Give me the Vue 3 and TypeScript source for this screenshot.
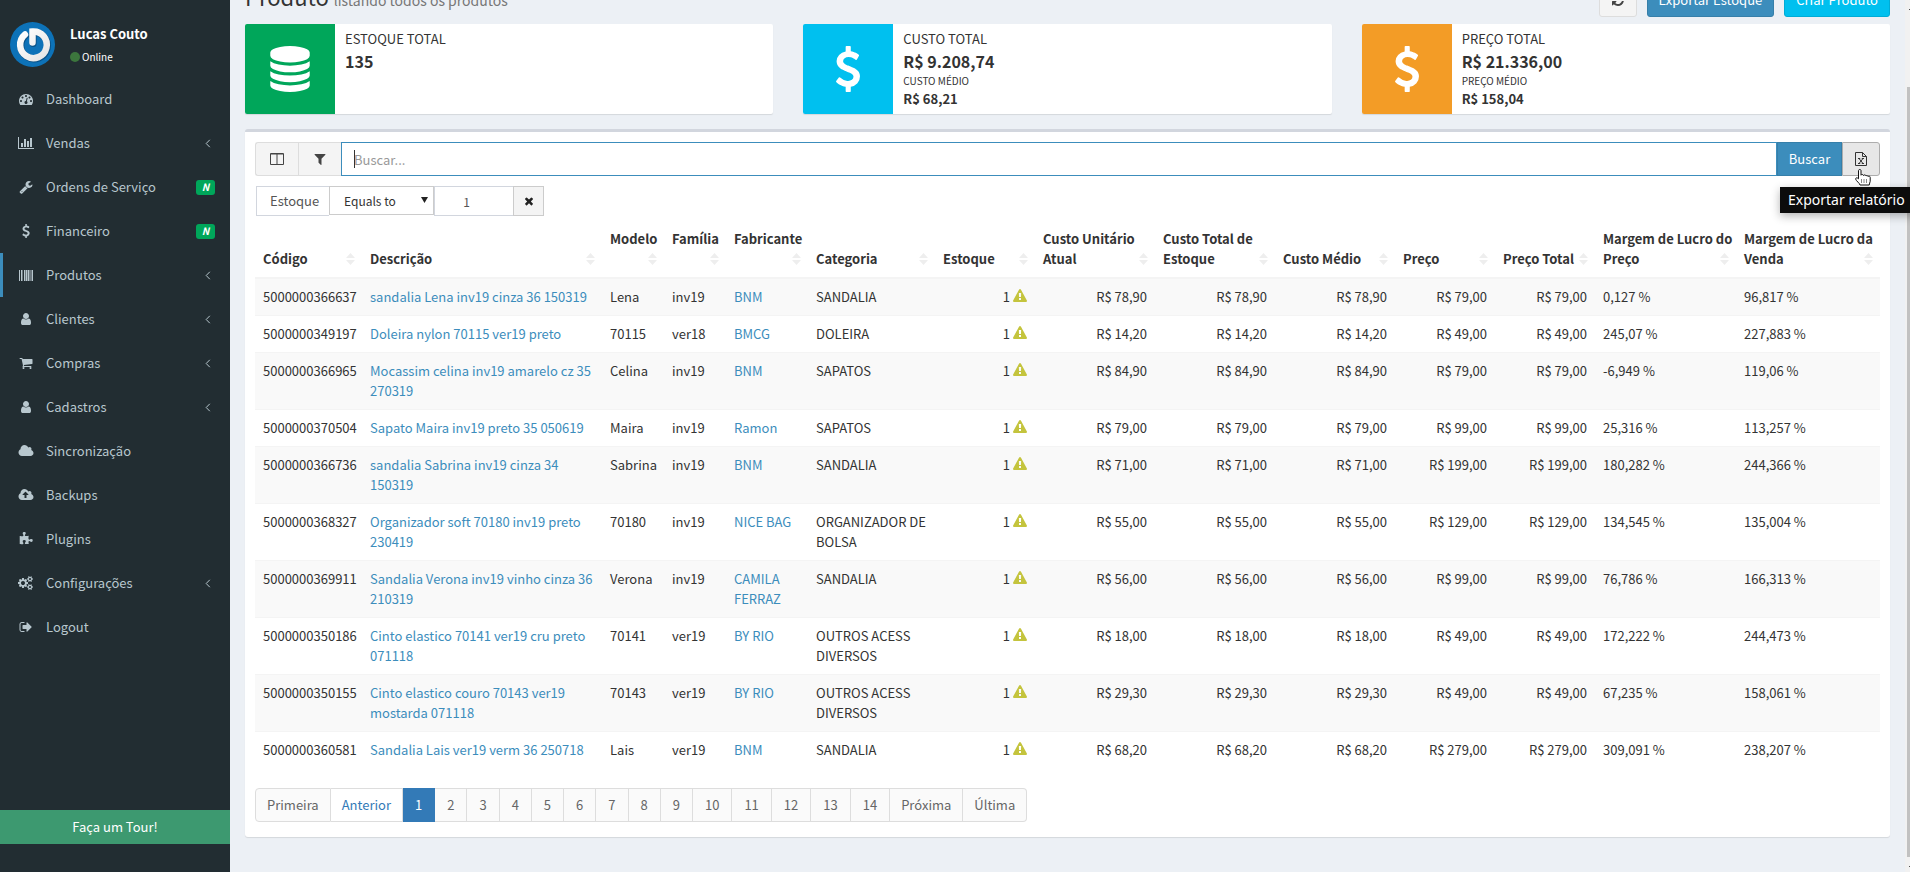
<script setup lang="ts">
import { ref } from 'vue'

interface Icon { box: string; d: string }
interface MenuItem { label: string; icon: string; arrow?: boolean; badge?: boolean; active?: boolean }
interface Product {
  code: string; name: string; model: string; family: string; maker: string; category: string
  stock: number; cost: string; price: string; priceMargin: string; saleMargin: string
}

const gearSmall = 'v140q0 16-149 31-12 27-30 52 51 113 51 138 0 4-4 7-122 71-124 71-8 0-46-47t-52-68q-20 2-30 2t-30-2q-14 21-52 68t-46 47q-2 0-124-71-4-3-4-7 0-25 51-138-18-25-30-52-149-15-149-31v-140q0-16 149-31 13-29 30-52-51-113-51-138 0-4 4-7 4-2 35-20t59-34 30-16q8 0 46 46.5t52 67.5q20-2 30-2t30 2q51-71 92-112l6-2q4 0 124 70 4 3 4 7 0 25-51 138 17 23 30 52 149 15 149 31z'
const cloudShape = 'M1984 1152q0 159-112.5 271.5t-271.5 112.5h-1088q-185 0-316.5-131.5t-131.5-316.5q0-132 71-241.5t187-163.5q-2-28-2-43 0-212 150-362t362-150q158 0 286.5 88t187.5 230q70-62 166-62 106 0 181 75t75 181q0 75-41 138 129 30 213 134.5t84 239.5z'
const discs = 'q237 0 443-43t325-127v170q0 69-103 128t-280 93.5-385 34.5-385-34.5-280-93.5-103-128v-170q119 84 325 127t443 43z'

const icons: Record<string, Icon> = {
  gauge: { box: '0 0 1792 1792', d: 'M384 1152q0-53-37.5-90.5t-90.5-37.5-90.5 37.5-37.5 90.5 37.5 90.5 90.5 37.5 90.5-37.5 37.5-90.5zm192-448q0-53-37.5-90.5t-90.5-37.5-90.5 37.5-37.5 90.5 37.5 90.5 90.5 37.5 90.5-37.5 37.5-90.5zm428 481l101-382q6-26-7.5-48.5t-38.5-29.5-48 6.5-30 39.5l-101 382q-60 5-107 43.5t-63 98.5q-20 77 20 146t117 89 146-20 89-117q16-60-6-117t-72-91zm660-33q0-53-37.5-90.5t-90.5-37.5-90.5 37.5-37.5 90.5 37.5 90.5 90.5 37.5 90.5-37.5 37.5-90.5zm-640-640q0-53-37.5-90.5t-90.5-37.5-90.5 37.5-37.5 90.5 37.5 90.5 90.5 37.5 90.5-37.5 37.5-90.5zm448 192q0-53-37.5-90.5t-90.5-37.5-90.5 37.5-37.5 90.5 37.5 90.5 90.5 37.5 90.5-37.5 37.5-90.5zm320 448q0 261-141 483-19 29-54 29h-1402q-35 0-54-29-141-221-141-483 0-182 71-348t191-286 286-191 348-71 348 71 286 191 191 286 71 348z' },
  chart: { box: '0 0 2048 1792', d: 'M640 896v512h-256v-512h256zm384-512v1024h-256v-1024h256zm1024 1152v128h-2048v-1536h128v1408h1920zm-640-896v768h-256v-768h256zm384-384v1152h-256v-1152h256z' },
  wrench: { box: '0 0 1792 1792', d: 'M448 1472q0-26-19-45t-45-19-45 19-19 45 19 45 45 19 45-19 19-45zm644-420l-682 682q-37 37-90 37-52 0-91-37l-106-108q-38-36-38-90 0-53 38-91l681-681q39 98 114.5 173.5t173.5 114.5zm634-435q0 39-23 106-47 134-164.5 217.5t-258.5 83.5q-185 0-316.5-131.5t-131.5-316.5 131.5-316.5 316.5-131.5q58 0 121.5 16.5t107.5 46.5q16 11 16 28t-16 28l-293 169v224l193 107q5-3 79-48.5t135.5-81 70.5-35.5q15 0 23.5 10t8.5 25z' },
  dollar: { box: '0 0 1792 1792', d: 'M1362 1185q0 153-99.5 263.5t-258.5 136.5v175q0 14-9 23t-23 9h-135q-13 0-22.5-9.5t-9.5-22.5v-175q-66-9-127.5-31t-101.5-44.5-74-48-46.5-37.5-17.5-18q-17-21-2-41l103-135q7-10 23-12 15-2 24 9l2 2q113 99 243 125 37 8 74 8 81 0 142.5-43t61.5-122q0-28-15-53t-33.5-42-58.5-37.5-66-32-80-32.5q-39-16-61.5-25t-61.5-26.5-62.5-31-56.5-35.5-53.5-42.5-43.5-49-35.5-58-21-66.5-8.5-78q0-138 98-242t255-134v-180q0-13 9.5-22.5t22.5-9.5h135q14 0 23 9t9 23v176q57 6 110.5 23t87 33.5 63.5 37.5 39 29 15 14q17 18 5 38l-81 146q-8 15-23 16-14 3-27-7-3-3-14.5-12t-39-26.5-58.5-32-74.5-26-85.5-11.5q-95 0-155 43t-60 111q0 26 8.5 48t29.5 41.5 39.5 33 56 31 60.5 27 70 27.5q53 20 81 31.5t76 35 75.5 42.5 62 50 53 63.5 31.5 76.5 13 94z' },
  barcode: { box: '0 0 14 14', d: 'M0 2h1v11h-1zM2 2h1v11h-1zM3.500 2h.5v11h-.5zM5 2h1.500v11h-1.500zM7 2h1v11h-1zM8.500 2h1.500v11h-1.500zM10.500 2h.5v11h-.5zM11.500 2h1v11h-1zM13 2h1v11h-1z' },
  user: { box: '0 0 1792 1792', d: 'M1536 1399q0 109-62.5 187t-150.5 78h-854q-88 0-150.5-78t-62.5-187q0-85 8.5-160.5t31.5-152 58.5-131 94-89 134.5-34.5q131 128 313 128t313-128q76 0 134.5 34.5t94 89 58.5 131 31.5 152 8.5 160.5zm-256-887q0 159-112.5 271.5t-271.5 112.5-271.5-112.5-112.5-271.5 112.5-271.5 271.5-112.5 271.5 112.5 112.5 271.5z' },
  cart: { box: '0 0 1792 1792', d: 'M704 1536q0 52-38 90t-90 38-90-38-38-90 38-90 90-38 90 38 38 90zm896 0q0 52-38 90t-90 38-90-38-38-90 38-90 90-38 90 38 38 90zm128-1088v512q0 24-16.5 42.5t-40.5 21.5l-1044 122q13 60 13 70 0 16-24 64h920q26 0 45 19t19 45-19 45-45 19h-1024q-26 0-45-19t-19-45q0-11 8-31.5t16-36 21.5-40 15.5-29.5l-177-823h-204q-26 0-45-19t-19-45 19-45 45-19h256q16 0 28.5 6.5t19.5 15.5 13 24.5 8 26 5.5 29.5 4.5 26h1201q26 0 45 19t19 45z' },
  cloud: { box: '0 0 2048 1792', d: cloudShape },
  upload: { box: '0 0 2048 1792', d: 'M1344 864q0-14-9-23l-352-352q-9-9-23-9t-23 9l-351 351q-10 12-10 24 0 14 9 23t23 9h224v352q0 13 9.5 22.5t22.5 9.5h192q13 0 22.5-9.5t9.5-22.5v-352h224q13 0 22.5-9.5t9.500-22.5z' + cloudShape },
  puzzle: { box: '0 0 1792 1792', d: 'M1755 1083q0 81-44.5 135t-123.5 54q-41 0-77.5-17.5t-59-38-56.5-38-71-17.5q-110 0-110 124 0 39 16 115t15 115v5q-22 0-33 1-34 3-97.5 11.5t-115.5 13.5-98 5q-61 0-103-26.5t-42-83.5q0-37 17.5-71t38-56.5 38-59 17.5-77.5q0-79-54-123.5t-135-44.5q-84 0-143 45.5t-59 127.5q0 43 15 83t33.5 64.5 33.5 53 15 50.5q0 45-46 89-37 35-117 35-95 0-245-24-9-2-27.5-4t-27.5-4l-13-2q-1 0-3-1-2 0-2-1v-1024q2 1 17.5 3.5t34 5 21.5 3.5q150 24 245 24 80 0 117-35 46-44 46-89 0-22-15-50.5t-33.5-53-33.5-64.5-15-83q0-82 59-127.5t144-45.5q80 0 134 44.5t54 123.5q0 41-17.5 77.5t-38 59-38 56.5-17.5 71q0 57 42 83.5t103 26.5q64 0 180-15t163-17v2q-1 2-3.5 17.5t-5 34-3.5 21.5q-24 150-24 245 0 80 35 117 44 46 89 46 22 0 50.5-15t53-33.5 64.5-33.5 83-15q82 0 127.5 59t45.5 143z' },
  cogs: { box: '0 0 2048 1792', d: 'M896 896q0-106-75-181t-181-75-181 75-75 181 75 181 181 75 181-75 75-181zm768 512q0-52-38-90t-90-38-90 38-38 90q0 53 37.5 90.5t90.5 37.5 90.5-37.5 37.5-90.5zm0-1024q0-52-38-90t-90-38-90 38-38 90q0 53 37.5 90.5t90.5 37.5 90.5-37.5 37.5-90.5zm-384 421v185q0 10-7 19.5t-16 10.5l-155 24q-11 35-32 76 34 48 90 115 7 11 7 20 0 12-7 19-23 30-82.5 89.5t-78.5 59.5q-11 0-21-7l-115-90q-37 19-77 31-11 108-23 155-7 24-30 24h-186q-11 0-20-7.5t-10-17.5l-23-153q-34-10-75-31l-118 89q-7 7-20 7-11 0-21-8-144-133-144-160 0-9 7-19 10-14 41-53t47-61q-23-44-35-82l-152-24q-10-1-17-9.5t-7-19.5v-185q0-10 7-19.5t16-10.5l155-24q11-35 32-76-34-48-90-115-7-11-7-20 0-12 7-20 22-30 82-89t79-59q11 0 21 7l115 90q34-18 77-32 11-108 23-154 7-24 30-24h186q11 0 20 7.5t10 17.5l23 153q34 10 75 31l118-89q8-7 20-7 11 0 21 8 144 133 144 160 0 8-7 19-12 16-42 54t-45 60q23 48 34 82l152 23q10 2 17 10.5t7 19.5zM1920 1338' + gearSmall + 'M1920 314' + gearSmall },
  logout: { box: '0 0 1792 1792', d: 'M704 1440q0 4 1 20t.5 26.500-3 23.500-10 19.500-20.500 6.500h-320q-119 0-203.500-84.500t-84.500-203.500v-704q0-119 84.500-203.500t203.500-84.500h320q13 0 22.500 9.500t9.500 22.500q0 4 1 20t.5 26.500-3 23.500-10 19.500-20.500 6.500h-320q-66 0-113 47t-47 113v704q0 66 47 113t113 47h312l11.500 1 11.500 3 8 5.500 7 9 2 13.500zm928-544q0 26-19 45l-544 544q-19 19-45 19t-45-19-19-45v-288h-448q-26 0-45-19t-19-45v-384q0-26 19-45t45-19h448v-288q0-26 19-45t45-19 45 19l544 544q19 19 19 45z' },
  database: { box: '0 0 1792 1792', d: 'M896 768' + discs + 'M896 1536' + discs + 'M896 1152' + discs + 'M896 0q208 0 385 34.5t280 93.5 103 128v128q0 69-103 128t-280 93.5-385 34.5-385-34.5-280-93.5-103-128v-128q0-69 103-128t280-93.5 385-34.5z' },
  filter: { box: '0 0 1792 1792', d: 'M1595 295q17 41-14 70l-493 493v742q0 42-39 59-13 5-25 5-27 0-45-19l-256-256q-19-19-19-45v-486l-493-493q-31-29-14-70 17-39 59-39h1280q42 0 59 39z' },
  warning: { box: '0 0 1792 1792', d: 'M1024 1375v-190q0-14-9.5-23.5t-22.5-9.5h-192q-13 0-22.5 9.5t-9.5 23.5v190q0 14 9.5 23.5t22.5 9.5h192q13 0 22.5-9.5t9.5-23.5zm-2-374l18-459q0-12-10-19-13-11-24-11h-220q-11 0-24 11-10 7-10 21l17 457q0 10 10 16.5t24 6.5h185q14 0 23.5-6.5t10.5-16.5zm-14-934l768 1408q35 63-2 126-17 29-46.5 46t-63.5 17h-1536q-34 0-63.5-17t-46.5-46q-37-63-2-126l768-1408q17-31 47-49t65-18 65 18 47 49z' },
  times: { box: '0 0 1792 1792', d: 'M1490 1322q0 40-28 68l-136 136q-28 28-68 28t-68-28l-294-294-294 294q-28 28-68 28t-68-28l-136-136q-28-28-28-68t28-68l294-294-294-294q-28-28-28-68t28-68l136-136q28-28 68-28t68 28l294 294 294-294q28-28 68-28t68 28l136 136q28 28 28 68t-28 68l-294 294 294 294q28 28 28 68z' },
  refresh: { box: '0 0 1792 1792', d: 'M1639 1056q0 5-1 7-64 268-268 434.5t-478 166.5q-146 0-282.5-55t-243.5-157l-129 129q-19 19-45 19t-45-19-19-45v-448q0-26 19-45t45-19h448q26 0 45 19t19 45-19 45l-137 137q71 66 161 102t187 36q134 0 250-65t186-179q11-17 53-117 8-23 30-23h192q13 0 22.5 9.5t9.5 22.5zm25-800v448q0 26-19 45t-45 19h-448q-26 0-45-19t-19-45 19-45l138-138q-148-137-349-137-134 0-250 65t-186 179q-11 17-53 117-8 23-30 23h-199q-13 0-22.5-9.5t-9.5-22.5v-7q65-268 270-434.5t480-166.5q146 0 284 55.5t245 156.5l130-129q19-19 45-19t45 19 19 45z' },
}

const menu: MenuItem[] = [
  { label: 'Dashboard', icon: 'gauge' },
  { label: 'Vendas', icon: 'chart', arrow: true },
  { label: 'Ordens de Serviço', icon: 'wrench', badge: true },
  { label: 'Financeiro', icon: 'dollar', badge: true },
  { label: 'Produtos', icon: 'barcode', arrow: true, active: true },
  { label: 'Clientes', icon: 'user', arrow: true },
  { label: 'Compras', icon: 'cart', arrow: true },
  { label: 'Cadastros', icon: 'user', arrow: true },
  { label: 'Sincronização', icon: 'cloud' },
  { label: 'Backups', icon: 'upload' },
  { label: 'Plugins', icon: 'puzzle' },
  { label: 'Configurações', icon: 'cogs', arrow: true },
  { label: 'Logout', icon: 'logout' },
]

const boxes = [
  { tone: 'green', icon: 'database', label: 'ESTOQUE TOTAL', value: '135' },
  { tone: 'aqua', icon: 'dollar', label: 'CUSTO TOTAL', value: 'R$ 9.208,74', subLabel: 'CUSTO MÉDIO', subValue: 'R$ 68,21' },
  { tone: 'orange', icon: 'dollar', label: 'PREÇO TOTAL', value: 'R$ 21.336,00', subLabel: 'PREÇO MÉDIO', subValue: 'R$ 158,04' },
]

const columns = [
  { key: 'codigo', lines: ['Código'] },
  { key: 'descricao', lines: ['Descrição'] },
  { key: 'modelo', lines: ['Modelo'] },
  { key: 'familia', lines: ['Família'] },
  { key: 'fabricante', lines: ['Fabricante'] },
  { key: 'categoria', lines: ['Categoria'] },
  { key: 'estoque', lines: ['Estoque'] },
  { key: 'custo', lines: ['Custo Unitário', 'Atual'] },
  { key: 'custo', lines: ['Custo Total de', 'Estoque'] },
  { key: 'custo', lines: ['Custo Médio'] },
  { key: 'preco', lines: ['Preço'] },
  { key: 'preco', lines: ['Preço Total'] },
  { key: 'margem-preco', lines: ['Margem de Lucro do', 'Preço'] },
  { key: 'margem-venda', lines: ['Margem de Lucro da', 'Venda'] },
]

const products: Product[] = ([
  ['5000000366637', 'sandalia Lena inv19 cinza 36 150319', 'Lena', 'inv19', 'BNM', 'SANDALIA', '78,90', '79,00', '0,127', '96,817'],
  ['5000000349197', 'Doleira nylon 70115 ver19 preto', '70115', 'ver18', 'BMCG', 'DOLEIRA', '14,20', '49,00', '245,07', '227,883'],
  ['5000000366965', 'Mocassim celina inv19 amarelo cz 35 270319', 'Celina', 'inv19', 'BNM', 'SAPATOS', '84,90', '79,00', '-6,949', '119,06'],
  ['5000000370504', 'Sapato Maira inv19 preto 35 050619', 'Maira', 'inv19', 'Ramon', 'SAPATOS', '79,00', '99,00', '25,316', '113,257'],
  ['5000000366736', 'sandalia Sabrina inv19 cinza 34 150319', 'Sabrina', 'inv19', 'BNM', 'SANDALIA', '71,00', '199,00', '180,282', '244,366'],
  ['5000000368327', 'Organizador soft 70180 inv19 preto 230419', '70180', 'inv19', 'NICE BAG', 'ORGANIZADOR DE BOLSA', '55,00', '129,00', '134,545', '135,004'],
  ['5000000369911', 'Sandalia Verona inv19 vinho cinza 36 210319', 'Verona', 'inv19', 'CAMILA FERRAZ', 'SANDALIA', '56,00', '99,00', '76,786', '166,313'],
  ['5000000350186', 'Cinto elastico 70141 ver19 cru preto 071118', '70141', 'ver19', 'BY RIO', 'OUTROS ACESS DIVERSOS', '18,00', '49,00', '172,222', '244,473'],
  ['5000000350155', 'Cinto elastico couro 70143 ver19 mostarda 071118', '70143', 'ver19', 'BY RIO', 'OUTROS ACESS DIVERSOS', '29,30', '49,00', '67,235', '158,061'],
  ['5000000360581', 'Sandalia Lais ver19 verm 36 250718', 'Lais', 'ver19', 'BNM', 'SANDALIA', '68,20', '279,00', '309,091', '238,207'],
] as string[][]).map(([code, name, model, family, maker, category, cost, price, priceMargin, saleMargin]) => ({
  code, name, model, family, maker, category, stock: 1, cost, price, priceMargin, saleMargin,
}))

const words = ['Primeira', 'Anterior', 'Próxima', 'Última']
const pages = [...words.slice(0, 2), ...Array.from({ length: 14 }, (_, i) => String(i + 1)), ...words.slice(2)]
const current = ref('1')
const search = ref('')
const operator = ref('eq')
const stockFilter = ref('1')
</script>

<template>
  <div class="app">
    <aside class="sidebar">
      <div class="user">
        <svg class="avatar" viewBox="0 0 45 45" aria-hidden="true">
          <defs>
            <linearGradient id="knob" x1="0" y1="0" x2="1" y2="1">
              <stop offset="0" stop-color="#fff" /><stop offset="1" stop-color="#e4e4e4" />
            </linearGradient>
          </defs>
          <circle cx="22.5" cy="22.5" r="22.500" fill="#0d72b8" />
          <g fill="none" stroke-linecap="round">
            <path d="M15 12.500A13.300 13.300 0 1 0 22.500 9.500V20.500" stroke="#0a5288" stroke-width="7" transform="translate(.7 .9)" />
            <path d="M15 12.500A13.300 13.300 0 1 0 22.500 9.500V20.500" stroke="url(#knob)" stroke-width="6.500" />
          </g>
        </svg>
        <div class="user-info">
          <strong>Lucas Couto</strong>
          <span class="status"><i class="dot"></i>Online</span>
        </div>
      </div>
      <nav>
        <ul class="menu">
          <li v-for="item in menu" :key="item.label" :class="{ active: item.active }">
            <a href="#">
              <span class="menu-icon">
                <svg class="fa" :viewBox="icons[item.icon].box" aria-hidden="true"><path fill-rule="evenodd" :d="icons[item.icon].d" /></svg>
              </span>
              <span class="menu-label">{{ item.label }}</span>
              <svg v-if="item.arrow" class="angle" viewBox="0 0 6 9" aria-hidden="true"><path d="M4.800.8 1.200 4.500l3.600 3.700" /></svg>
              <em v-if="item.badge" class="badge">N</em>
            </a>
          </li>
        </ul>
      </nav>
      <button class="tour" type="button">Faça um Tour!</button>
    </aside>

    <main class="content">
      <header class="page-head">
        <h1>Produto <small>listando todos os produtos</small></h1>
        <div class="actions">
          <button class="btn refresh" type="button" aria-label="Atualizar">
            <svg class="fa" :viewBox="icons.refresh.box" aria-hidden="true"><path :d="icons.refresh.d" /></svg>
          </button>
          <button class="btn primary" type="button">Exportar Estoque</button>
          <button class="btn info" type="button">Criar Produto</button>
        </div>
      </header>

      <section class="boxes">
        <article v-for="box in boxes" :key="box.label" class="box">
          <div class="box-icon" :class="box.tone">
            <svg :viewBox="icons[box.icon].box" aria-hidden="true"><path :d="icons[box.icon].d" /></svg>
          </div>
          <div class="box-text">
            <span>{{ box.label }}</span>
            <strong class="big">{{ box.value }}</strong>
            <template v-if="box.subLabel">
              <small>{{ box.subLabel }}</small>
              <strong>{{ box.subValue }}</strong>
            </template>
          </div>
        </article>
      </section>

      <section class="card">
        <form class="search" @submit.prevent>
          <button class="tool first" type="button" aria-label="Colunas">
            <svg class="columns-icon" viewBox="0 0 14 12" aria-hidden="true"><path d="M.5.5h13v11H.5zM7 1v10M1 1h12" /></svg>
          </button>
          <button class="tool" type="button" aria-label="Filtros">
            <svg class="fa" :viewBox="icons.filter.box" aria-hidden="true"><path :d="icons.filter.d" /></svg>
          </button>
          <div class="search-field">
            <input v-model="search" type="text" placeholder="Buscar..." aria-label="Buscar" />
            <span class="caret"></span>
          </div>
          <button class="submit" type="submit">Buscar</button>
          <div class="export">
            <button class="tool last" type="button" aria-label="Exportar relatório">
              <svg class="sheet" viewBox="0 0 12 14" aria-hidden="true">
                <path d="M.5.5h7l4 4v9H.5zM7.500.5v4h4" />
                <path d="M3 6.500h2.200M6.800 6.500H9M3 11.500h2.200M6.800 11.500H9M4 6.500l4 5M8 6.500l-4 5" />
              </svg>
            </button>
            <svg class="pointer" viewBox="0 0 16 17" aria-hidden="true">
              <path d="M3.500 1.500c0-1.300 2.500-1.300 2.500 0v4.700c.2-1 2.400-.9 2.500.3.400-.9 2.300-.8 2.500.4.500-.6 2-.4 2 .6.700-.7 2.200-.4 2.200.8v4c0 1.500-1 2-1 3.700H5c0-1.500-4-4.200-4.300-5.800C.500 8.700 2 8.200 3.500 9.800z" />
              <path d="M6.500 10.500v3M9 10.500v3M11.500 10.500v3" stroke-dasharray="1 1" />
            </svg>
            <span class="tooltip" role="tooltip">Exportar relatório</span>
          </div>
        </form>

        <div class="filter">
          <label for="stock-value">Estoque</label>
          <div class="select-wrap">
            <select v-model="operator" aria-label="Operador">
              <option value="eq">Equals to</option>
            </select>
            <svg class="drop" viewBox="0 0 7 6" aria-hidden="true"><path d="M0 0h7L3.500 6z" /></svg>
          </div>
          <input id="stock-value" v-model="stockFilter" type="text" />
          <button type="button" aria-label="Remover filtro">
            <svg class="remove" :viewBox="icons.times.box" aria-hidden="true"><path :d="icons.times.d" /></svg>
          </button>
        </div>

        <table>
          <colgroup>
            <col v-for="(col, i) in columns" :key="i" :class="'col-' + col.key" />
          </colgroup>
          <thead>
            <tr>
              <th v-for="(col, i) in columns" :key="i" scope="col">
                <button type="button" class="sort">
                  <template v-for="(line, n) in col.lines" :key="n"><br v-if="n" />{{ line }}</template>
                  <svg viewBox="0 0 9 12" aria-hidden="true"><path d="M4.500 0 9 5H0zM0 7h9l-4.500 5z" /></svg>
                </button>
              </th>
            </tr>
          </thead>
          <tbody>
            <tr v-for="p in products" :key="p.code">
              <td>{{ p.code }}</td>
              <td><a href="#">{{ p.name }}</a></td>
              <td>{{ p.model }}</td>
              <td>{{ p.family }}</td>
              <td><a href="#">{{ p.maker }}</a></td>
              <td>{{ p.category }}</td>
              <td class="num">{{ p.stock }} <svg class="warn" :viewBox="icons.warning.box" aria-hidden="true"><path fill-rule="evenodd" :d="icons.warning.d" /></svg></td>
              <td class="num">R$ {{ p.cost }}</td>
              <td class="num">R$ {{ p.cost }}</td>
              <td class="num">R$ {{ p.cost }}</td>
              <td class="num">R$ {{ p.price }}</td>
              <td class="num">R$ {{ p.price }}</td>
              <td>{{ p.priceMargin }} %</td>
              <td>{{ p.saleMargin }} %</td>
            </tr>
          </tbody>
        </table>

        <nav class="pages" aria-label="Paginação">
          <a v-for="page in pages" :key="page" href="#" :class="{ current: page === current, word: words.includes(page), previous: page === 'Anterior' }">{{ page }}</a>
        </nav>
      </section>
    </main>

    <div class="scrollbar" aria-hidden="true">
      <i class="arrow"></i>
      <i class="thumb"></i>
      <i class="arrow"></i>
    </div>
  </div>
</template>

<style>
body { margin: 0; overflow: hidden; }
</style>

<style scoped>
* { box-sizing: border-box; }
.app {
  display: flex;
  height: 100vh;
  overflow: hidden;
  background: #ecf0f5;
  color: #333;
  font: 13px/20px "Noto Sans CJK JP", "Noto Sans CJK SC", "Noto Sans", sans-serif;
}
button, input, select { font: inherit; color: inherit; margin: 0; border-radius: 0; }
button { cursor: pointer; }
a { color: #3c8dbc; text-decoration: none; }
svg { display: block; fill: currentColor; }
.fa { height: 14px; width: auto; }

.sidebar {
  flex: 0 0 230px;
  display: flex;
  flex-direction: column;
  background: #222d32;
  color: #b8c7ce;
}
.user { display: flex; gap: 15px; padding: 22px 10px 10px; color: #fff; }
.avatar { width: 45px; height: 45px; }
.user-info { display: flex; flex-direction: column; gap: 3px; padding-top: 2px; }
.status { display: flex; align-items: center; gap: 2px; font-size: 10px; }
.dot { width: 10px; height: 10px; border-radius: 50%; background: #3c763d; }
.menu { list-style: none; margin: 0; padding: 0; }
.menu a {
  display: flex;
  align-items: center;
  height: 44px;
  padding: 0 15px 0 12px;
  border-left: 3px solid transparent;
  color: #b8c7ce;
}
.menu .active a { border-left-color: #3c8dbc; }
.menu-icon { flex: 0 0 22px; display: flex; justify-content: center; margin-right: 9px; }
.menu-label { flex: 1; }
.angle { width: 6px; height: 9px; margin-right: 4px; fill: none; stroke: currentColor; }
.badge {
  width: 19px;
  height: 15px;
  border-radius: 3px;
  background: #00a65a;
  color: #fff;
  font-size: 10px;
  font-weight: 700;
  line-height: 14px;
  text-align: center;
}
.tour {
  height: 34px;
  margin: auto 0 28px;
  border: 0;
  background: #3d9970;
  color: #fff;
}

.content { flex: 1; min-width: 0; padding: 0 15px; }
.page-head {
  display: flex;
  justify-content: space-between;
  height: 34px;
  margin-top: -17px;
}
h1 { margin: 0; font-size: 22px; font-weight: 400; line-height: 26px; }
h1 small { color: #777; font-size: 14px; }
.actions { display: flex; gap: 10px; }
.btn { height: 34px; padding: 0 11px; border: 1px solid; border-radius: 3px; color: #fff; }
.refresh { border-color: #ddd; background: #f4f4f4; color: #444; }
.primary { border-color: #367fa9; background: #3c8dbc; }
.info { border-color: #00acd6; background: #00c0ef; }

.boxes { display: grid; grid-template-columns: repeat(3, 1fr); gap: 30px; margin-top: 7px; }
.box {
  display: flex;
  height: 90px;
  border-radius: 2px;
  background: #fff;
  box-shadow: 0 1px 1px rgba(0, 0, 0, 0.1);
}
.box-icon {
  flex: 0 0 90px;
  display: flex;
  align-items: center;
  justify-content: center;
  border-radius: 2px 0 0 2px;
  color: #fff;
}
.box-icon svg { width: 46px; height: 46px; }
.green { background: #00a65a; }
.aqua { background: #00c0ef; }
.orange { background: #f39c26; }
.box-text { display: flex; flex-direction: column; padding: 5px 10px; }
.box-text .big { font-size: 16px; line-height: 24px; }
.box-text small { font-size: 10px; line-height: 16px; }

.card {
  margin-top: 15px;
  padding: 10px 10px 15px;
  border-top: 3px solid #d2d6de;
  border-radius: 3px;
  background: #fff;
  box-shadow: 0 1px 1px rgba(0, 0, 0, 0.1);
}
.search { display: flex; height: 34px; }
.tool {
  display: flex;
  align-items: center;
  justify-content: center;
  width: 43px;
  height: 34px;
  padding: 0;
  border: 1px solid #ddd;
  border-right: 0;
  background: #f4f4f4;
  color: #444;
}
.first { border-radius: 3px 0 0 3px; }
.last { width: 38px; border: 1px solid #adadad; border-radius: 0 3px 3px 0; background: #e7e7e7; color: #333; }
.columns-icon { width: 14px; height: 12px; fill: none; stroke: currentColor; }
.search-field { position: relative; flex: 1; }
.search-field input {
  width: 100%;
  height: 34px;
  padding: 0 12px;
  border: 1px solid #3c8dbc;
  outline: 0;
  background: #fff;
}
.search-field input::placeholder { color: #999; opacity: 1; }
.caret { position: absolute; left: 13px; top: 8px; width: 1px; height: 18px; background: #333; }
.submit { width: 65px; padding: 0; border: 1px solid #367fa9; background: #3c8dbc; color: #fff; }
.export { position: relative; }
.sheet { width: 12px; height: 14px; fill: none; stroke: currentColor; }
.pointer {
  position: absolute;
  z-index: 3;
  left: 13px;
  top: 27px;
  width: 16px;
  height: 17px;
  fill: #fff;
  stroke: #111;
  overflow: visible;
}
.tooltip {
  position: absolute;
  z-index: 2;
  left: -62px;
  top: 45px;
  width: 140px;
  height: 26px;
  padding-left: 8px;
  background: #0c0c0c;
  box-shadow: 0 3px 10px rgba(0, 0, 0, 0.3);
  color: #fff;
  font: 14px/26px "Noto Sans", sans-serif;
  white-space: nowrap;
}

.filter { display: flex; align-items: flex-start; margin: 10px 0 5px 1px; color: #555; }
.filter label { width: 73px; height: 30px; padding-left: 13px; border: 1px solid #d2d6de; border-right: 0; line-height: 28px; }
.select-wrap { position: relative; }
.filter select {
  display: block;
  width: 105px;
  height: 29px;
  padding: 0 14px;
  border: 1px solid #ccc;
  background: #fff;
  color: #333;
  font-size: 12px;
  appearance: none;
}
.drop { position: absolute; right: 6px; top: 11px; width: 7px; height: 6px; color: #222; pointer-events: none; }
.filter input { width: 79px; height: 30px; padding: 0 15px 0 0; border: 1px solid #d2d6de; border-right: 0; background: #fff; font-size: 12px; text-align: center; }
.filter button { display: flex; align-items: center; justify-content: center; width: 31px; height: 30px; padding: 0; border: 1px solid #ccc; background: #f4f4f4; color: #222; }
.remove { width: 12px; height: 12px; }

table { width: 100%; margin-bottom: 20px; border-collapse: collapse; table-layout: fixed; }
.col-codigo { width: 107px; }
.col-descricao { width: 240px; }
.col-modelo, .col-familia { width: 62px; }
.col-fabricante { width: 82px; }
.col-categoria { width: 127px; }
.col-estoque, .col-preco { width: 100px; }
.col-custo { width: 120px; }
.col-margem-preco { width: 141px; }
.col-margem-venda { width: 144px; }
th { padding: 8px 7px 8px 8px; border-bottom: 2px solid #f4f4f4; vertical-align: bottom; }
.sort {
  display: block;
  width: 100%;
  padding: 0;
  border: 0;
  background: none;
  font-weight: 700;
  text-align: left;
  white-space: nowrap;
}
.sort svg { float: right; width: 9px; height: 12px; margin: 4px 0; fill: #eee; }
td { padding: 8px; border-top: 1px solid #f4f4f4; vertical-align: top; }
tbody tr:nth-child(odd) { background: #f9f9f9; }
.num { text-align: right; white-space: nowrap; }
.warn { display: inline-block; width: 14px; height: 14px; vertical-align: -1px; color: #c4c43d; }

.pages { display: flex; }
.pages a {
  height: 34px;
  padding: 6px 12px;
  border: 1px solid #ddd;
  border-left: 0;
  background: #fafafa;
  color: #666;
}
.pages .word { padding: 6px 11px; }
.pages a:first-child { border-left: 1px solid #ddd; border-radius: 4px 0 0 4px; }
.pages a:last-child { border-radius: 0 4px 4px 0; }
.pages .previous { background: #fff; color: #337ab7; }
.pages .current { border-color: #337ab7; background: #337ab7; color: #fff; }

.scrollbar { flex: 0 0 5px; display: flex; flex-direction: column; align-items: flex-end; padding: 9px 0 5px; background: #f1f1f1; }
.scrollbar .arrow { width: 1px; height: 1px; background: #505050; }
.scrollbar .thumb { flex: 1; width: 3px; margin: 77px 0 9px; background: #c1c1c1; }
</style>
